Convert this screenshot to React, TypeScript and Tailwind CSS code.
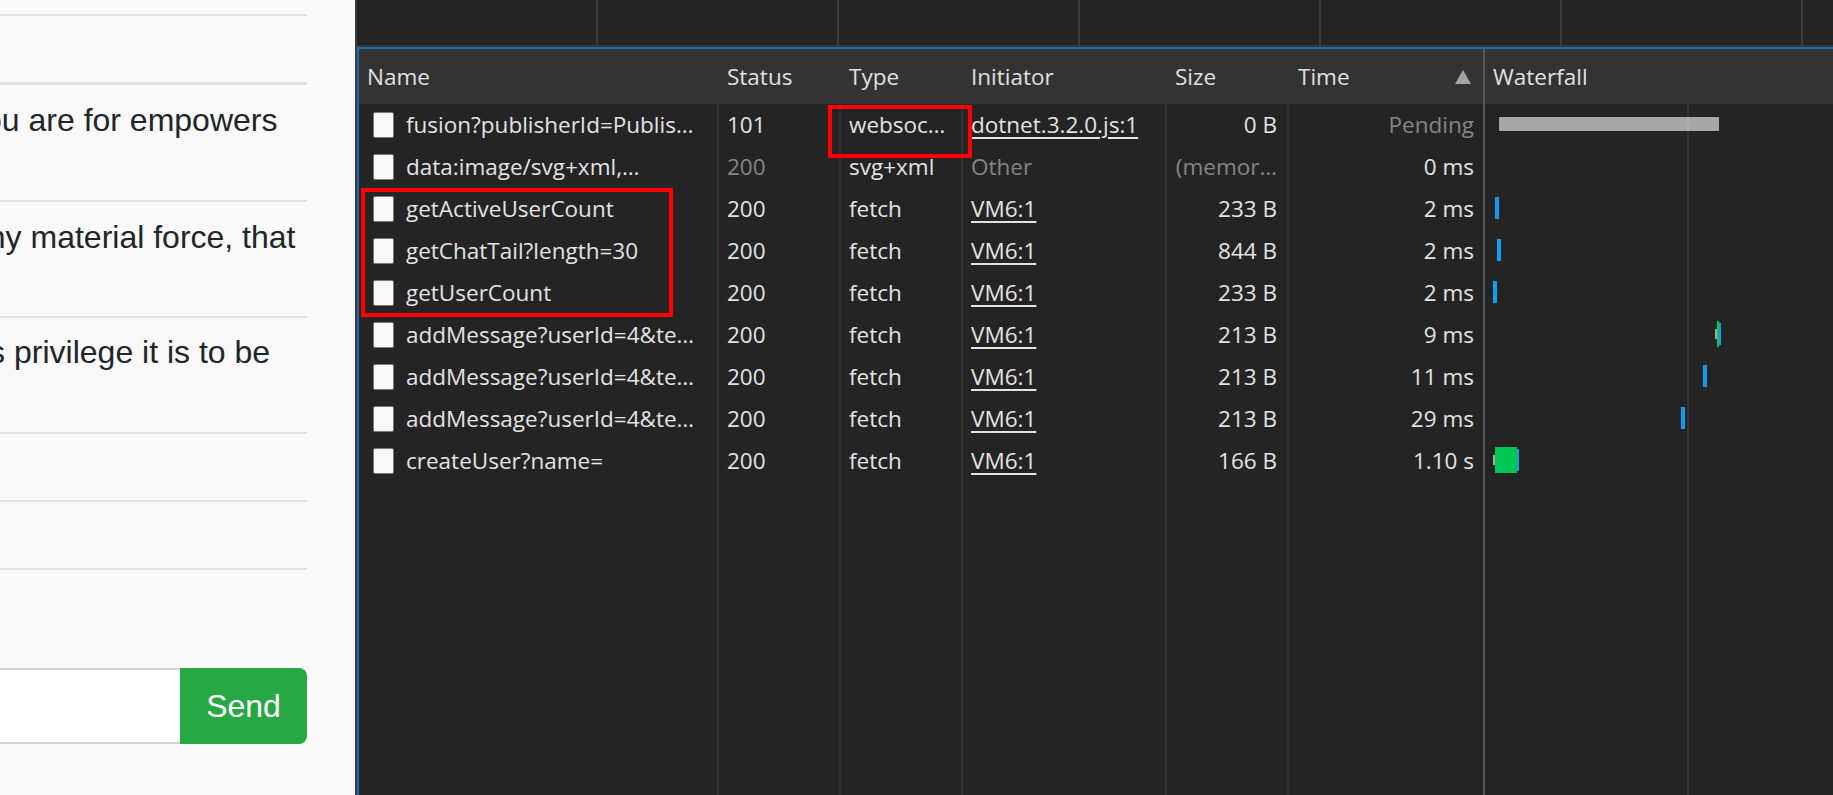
import React from "react";

type Row = {
  name: string;
  status: string;
  statusDim?: boolean;
  type: string;
  initiator: string;
  initLink: boolean;
  size: string;
  sizeDim?: boolean;
  time: string;
  timeDim?: boolean;
  bars: { left: number; top: number; w: number; h: number; c: string }[];
};

const BLUE = "#0aa0ef";
const GREEN = "#00c853";
const GREY = "#a9a9a9";

const rows: Row[] = [
  {
    name: "fusion?publisherId=Publis…",
    status: "101",
    type: "websoc…",
    initiator: "dotnet.3.2.0.js:1",
    initLink: true,
    size: "0 B",
    time: "Pending",
    timeDim: true,
    bars: [{ left: 14, top: 13, w: 220, h: 14, c: "#a6a6a6" }],
  },
  {
    name: "data:image/svg+xml,…",
    status: "200",
    statusDim: true,
    type: "svg+xml",
    initiator: "Other",
    initLink: false,
    size: "(memor…",
    sizeDim: true,
    time: "0 ms",
    bars: [],
  },
  {
    name: "getActiveUserCount",
    status: "200",
    type: "fetch",
    initiator: "VM6:1",
    initLink: true,
    size: "233 B",
    time: "2 ms",
    bars: [{ left: 10, top: 9, w: 4, h: 22, c: BLUE }],
  },
  {
    name: "getChatTail?length=30",
    status: "200",
    type: "fetch",
    initiator: "VM6:1",
    initLink: true,
    size: "844 B",
    time: "2 ms",
    bars: [{ left: 12, top: 9, w: 4, h: 22, c: BLUE }],
  },
  {
    name: "getUserCount",
    status: "200",
    type: "fetch",
    initiator: "VM6:1",
    initLink: true,
    size: "233 B",
    time: "2 ms",
    bars: [{ left: 8, top: 9, w: 4, h: 22, c: BLUE }],
  },
  {
    name: "addMessage?userId=4&te…",
    status: "200",
    type: "fetch",
    initiator: "VM6:1",
    initLink: true,
    size: "213 B",
    time: "9 ms",
    bars: [
      { left: 230, top: 15, w: 2, h: 10, c: GREY },
      { left: 232, top: 7, w: 2, h: 26, c: GREEN },
      { left: 234, top: 9, w: 2, h: 22, c: BLUE },
    ],
  },
  {
    name: "addMessage?userId=4&te…",
    status: "200",
    type: "fetch",
    initiator: "VM6:1",
    initLink: true,
    size: "213 B",
    time: "11 ms",
    bars: [{ left: 218, top: 9, w: 4, h: 22, c: BLUE }],
  },
  {
    name: "addMessage?userId=4&te…",
    status: "200",
    type: "fetch",
    initiator: "VM6:1",
    initLink: true,
    size: "213 B",
    time: "29 ms",
    bars: [{ left: 196, top: 9, w: 4, h: 22, c: BLUE }],
  },
  {
    name: "createUser?name=",
    status: "200",
    type: "fetch",
    initiator: "VM6:1",
    initLink: true,
    size: "166 B",
    time: "1.10 s",
    bars: [
      { left: 8, top: 15, w: 2, h: 10, c: GREY },
      { left: 10, top: 7, w: 22, h: 26, c: GREEN },
      { left: 32, top: 9, w: 2, h: 22, c: BLUE },
    ],
  },
];

function LeftPanel() {
  return (
    <div className="w-[355px] h-full shrink-0 bg-[#f9f9fa] overflow-hidden font-['Liberation_Sans',Arial,sans-serif] text-[#212529]">
      <div className="w-[307px] flex flex-col text-[32px] leading-[40px]">
        <div className="h-[16px] border-b-2 border-[#dee2e6]" />
        <div className="h-[69px] border-b-[3px] border-[#dee2e6]" />
        <div className="h-[117px] border-b-2 border-[#dee2e6] pt-[15px]">
          <div className="whitespace-nowrap ml-[-32px]">you are for empowers</div>
        </div>
        <div className="h-[116px] border-b-2 border-[#dee2e6] pt-[15px]">
          <div className="whitespace-nowrap ml-[-30px]">any material force, that</div>
        </div>
        <div className="h-[116px] border-b-2 border-[#dee2e6] pt-[14px]">
          <div className="whitespace-nowrap ml-[-18px]">is privilege it is to be</div>
        </div>
        <div className="h-[68px] border-b-2 border-[#dee2e6]" />
        <div className="h-[68px] border-b-2 border-[#dee2e6]" />
        <div className="h-[98px]" />
        <div className="flex h-[76px]">
          <div className="flex-1 bg-white border-y-2 border-[#ced4da]" />
          <div className="w-[127px] bg-[#28a745] rounded-r-[8px] flex items-center justify-center text-white text-[32px]">
            Send
          </div>
        </div>
      </div>
    </div>
  );
}

function FileIcon() {
  return <div className="w-[21px] h-[26px] shrink-0 bg-[#fafafa] border border-[#7a7a7a] rounded-[2px]" />;
}

function DataRow({ r }: { r: Row }) {
  const dim = "text-[#858585]";
  return (
    <div className="flex h-[42px] shrink-0">
      <div className="w-[360px] border-r-2 border-[#313131] flex items-center pl-[14px] overflow-hidden">
        <FileIcon />
        <span className="ml-[12px] whitespace-nowrap">{r.name}</span>
      </div>
      <div className={`w-[122px] border-r-2 border-[#313131] flex items-center pl-[8px] ${r.statusDim ? dim : ""}`}>
        {r.status}
      </div>
      <div className="w-[122px] border-r-2 border-[#313131] flex items-center pl-[8px] whitespace-nowrap overflow-hidden">
        {r.type}
      </div>
      <div className="w-[204px] border-r-2 border-[#313131] flex items-center pl-[8px] whitespace-nowrap overflow-hidden">
        {r.initLink ? (
          <span className="underline underline-offset-[4px] decoration-[1.5px]">{r.initiator}</span>
        ) : (
          <span className={dim}>{r.initiator}</span>
        )}
      </div>
      <div
        className={`w-[122px] border-r-2 border-[#313131] flex items-center justify-end pr-[10px] whitespace-nowrap overflow-hidden ${
          r.sizeDim ? dim : ""
        }`}
      >
        {r.size}
      </div>
      <div
        className={`w-[196px] border-r-2 border-[#555555] flex items-center justify-end pr-[9px] ${r.timeDim ? dim : ""}`}
      >
        {r.time}
      </div>
      <div className="flex-1 relative">
        {r.bars.map((b, i) => (
          <div
            key={i}
            className="absolute"
            style={{ left: b.left, top: b.top, width: b.w, height: b.h, background: b.c }}
          />
        ))}
      </div>
    </div>
  );
}

function DevTools() {
  return (
    <div className="flex-1 h-full flex flex-col bg-[#242424] font-['Open_Sans','Noto_Sans',sans-serif] text-[22.5px] text-[#e3e3e3]">
      <div className="h-[47px] shrink-0 flex border-b-2 border-[#363636]">
        {[0, 1, 2, 3, 4, 5].map((i) => (
          <div key={i} className="w-[241px] shrink-0 border-r-2 border-[#3a3a3a]" />
        ))}
      </div>
      <div className="flex-1 flex flex-col border-l-2 border-t-2 border-[#1e6db3] min-h-0">
        <div className="h-[55px] shrink-0 flex bg-[#333333] text-[#e0e0e0]">
          <div className="w-[360px] flex items-center pl-[8px]">Name</div>
          <div className="w-[122px] flex items-center pl-[8px]">Status</div>
          <div className="w-[122px] flex items-center pl-[8px]">Type</div>
          <div className="w-[204px] flex items-center pl-[8px]">Initiator</div>
          <div className="w-[122px] flex items-center pl-[8px]">Size</div>
          <div className="w-[196px] border-r-2 border-[#555555] flex items-center justify-between pl-[9px] pr-[12px]">
            <span>Time</span>
            <svg width="16" height="14" viewBox="0 0 16 14">
              <path d="M8 0 L16 14 L0 14 Z" fill="#a3a3a3" />
            </svg>
          </div>
          <div className="flex-1 flex items-center pl-[8px]">Waterfall</div>
        </div>
        <div className="flex-1 flex flex-col relative min-h-0">
          {rows.map((r, i) => (
            <DataRow key={i} r={r} />
          ))}
          <div className="flex-1 flex">
            <div className="w-[360px] border-r-2 border-[#313131]" />
            <div className="w-[122px] border-r-2 border-[#313131]" />
            <div className="w-[122px] border-r-2 border-[#313131]" />
            <div className="w-[204px] border-r-2 border-[#313131]" />
            <div className="w-[122px] border-r-2 border-[#313131]" />
            <div className="w-[196px] border-r-2 border-[#555555]" />
            <div className="flex-1" />
          </div>
          <div className="absolute top-0 bottom-0 left-[1328px] w-[2px] bg-[rgba(255,255,255,0.07)]" />
        </div>
      </div>
    </div>
  );
}

export default function App() {
  return (
    <div className="relative flex w-[1833px] h-[795px] overflow-hidden">
      <LeftPanel />
      <div className="w-[2px] shrink-0 bg-[#3c3c3c]" />
      <DevTools />
      <div className="absolute left-[361px] top-[188px] w-[312px] h-[129px] border-4 border-[#ff0000]" />
      <div className="absolute left-[828px] top-[105px] w-[144px] h-[53px] border-4 border-[#ff0000]" />
    </div>
  );
}
